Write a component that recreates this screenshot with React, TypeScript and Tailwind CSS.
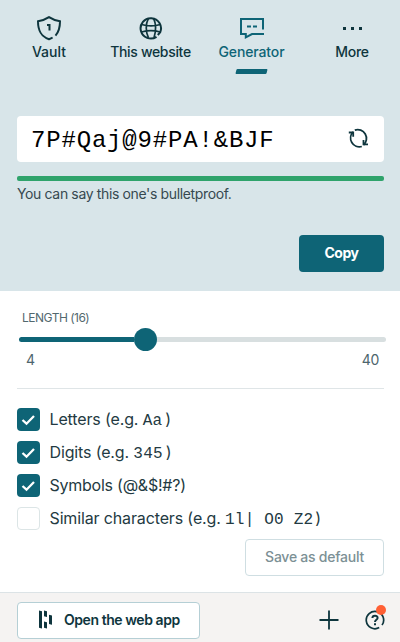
import type { ReactNode } from "react";

function Tab({ icon, label, width, labelClass, active }: { icon: ReactNode; label: string; width: string; labelClass: string; active?: boolean }) {
  return (
    <button className={`flex shrink-0 flex-col items-center ${width} ${active ? "text-[#0e6476]" : "text-[#0e353d]"}`}>
      <span className="flex h-6 items-center">{icon}</span>
      <span className={`mt-0.5 text-sm leading-5 font-medium whitespace-nowrap ${labelClass}`}>{label}</span>
      {active && <span className="mt-[7px] h-[5px] w-[31px] -skew-x-[14deg] rounded-[1px] bg-[#0e6476]" />}
    </button>
  );
}

function Shield() {
  return (
    <svg width="26" height="26" viewBox="0 0 26 26" fill="none" stroke="currentColor" strokeWidth="2">
      <path d="M19.500 20.700C22.800 17 24 12.800 24 6.300C20.200 5.800 16.400 4.400 13 2.200C9.600 4.400 5.800 5.800 2 6.300C2 15.700 4.800 21.300 13 24.200C14.400 23.700 15.500 23.200 16.600 22.500" />
      <path d="M11 9.900H13.500V15.500" />
    </svg>
  );
}

function Globe() {
  return (
    <svg width="24" height="24" viewBox="0 0 24 24" fill="none" stroke="currentColor" strokeWidth="2">
      <path d="M17.500 20.800A10.200 10.200 0 1 1 21.200 16.300L18.800 19" />
      <path d="M2.500 8.500C8 10 16 10 21.500 8.500M2.500 16C8 14.500 16 14.500 21 16M9.500 2.200C6.500 8 6.500 16 9.500 21.800M14.500 2.200C17.200 8 17.200 15 15 21.800" strokeWidth="1.700" />
    </svg>
  );
}

function Chat() {
  return (
    <svg width="26" height="24" viewBox="0 0 26 24" fill="none" stroke="currentColor" strokeWidth="2">
      <path d="M24 13.500V3H2V18H6.800V21.300L13 18H25" />
      <path d="M8 10.500H12M14 10.500H18" />
    </svg>
  );
}

function Option({ checked, children }: { checked?: boolean; children: ReactNode }) {
  return (
    <label className="flex h-[33px] items-center">
      <span className={`flex size-[23px] shrink-0 items-center justify-center rounded-[4px] ${checked ? "bg-[#0e6476]" : "border border-[#dce5e6] bg-white"}`}>
        {checked && (
          <svg width="15" height="12" viewBox="0 0 15 12" fill="none" stroke="white" strokeWidth="2.300">
            <path d="M1.500 6L5.500 9.700L13 2" />
          </svg>
        )}
      </span>
      <span className="mb-px ml-[9.5px] flex h-6 items-baseline whitespace-pre text-base leading-6 text-[#233a42]">{children}</span>
    </label>
  );
}

export default function App() {
  return (
    <div className="flex h-[642px] w-[400px] flex-col overflow-hidden bg-white font-['Inter','Liberation_Sans',sans-serif]">
      <section className="h-[291px] bg-[#d8e5e9]">
        <nav className="flex h-[116px] items-start pt-4">
          <Tab icon={<Shield />} label="Vault" width="w-[98px]" labelClass="tracking-[0.02px]" />
          <Tab icon={<Globe />} label="This website" width="w-[105px]" labelClass="tracking-[-0.32px]" />
          <Tab icon={<Chat />} label="Generator" width="w-[97px]" labelClass="tracking-[-0.13px]" active />
          <Tab
            icon={
              <span className="flex gap-[5px]">
                <i className="size-[3px] bg-current" />
                <i className="size-[3px] bg-current" />
                <i className="size-[3px] bg-current" />
              </span>
            }
            label="More"
            width="w-[104px]"
            labelClass="tracking-[-0.3px]"
          />
        </nav>
        <div className="px-[17px] pr-4">
          <div className="flex h-[46px] items-center justify-between rounded-[4px] bg-white pr-[15px] pl-[14px]">
            <span className="pt-[3px] font-['Liberation_Mono',monospace] text-2xl leading-8 tracking-[0.82px] text-black">7P#Qaj@9#PA!&amp;BJF</span>
            <svg className="-mt-0.5" width="21" height="21" viewBox="0 0 21 21" fill="none" stroke="#0e353d" strokeWidth="1.800">
              <path d="M6.800 2.100A8.800 8.800 0 0 1 15.500 17M13.800 18.500A8.800 8.800 0 0 1 5.200 3.800" />
              <path d="M0.800 4.500H5.200V8.800M20 16.300H15.500V12" />
            </svg>
          </div>
          <div className="mt-[14px] h-[5px] rounded-[2px] bg-[#2fa36b]" />
          <p className="mt-[3px] text-sm leading-5 tracking-[-0.36px] text-[#364950]">You can say this one's bulletproof.</p>
          <div className="mt-[31px] flex justify-end">
            <button className="h-[37px] w-[85px] rounded-[4px] bg-[#0e6476] pb-px text-sm font-bold tracking-[-0.5px] text-white">Copy</button>
          </div>
        </div>
      </section>
      <section className="flex h-[301px] flex-col pr-4 pl-[17px]">
        <div className="pt-[19px] pl-[5px] text-xs leading-4 tracking-[-0.5px] text-[#52686e]">LENGTH (16)</div>
        <div className="mt-[1px] -mr-0.5 ml-0.5 flex h-6 items-center">
          <div className="h-[5px] w-[115px] rounded-l-full bg-[#0e6476]" />
          <div className="size-[23px] shrink-0 rounded-full bg-[#0e6476]" />
          <div className="h-[5px] grow rounded-r-full bg-[#d8dfe0]" />
        </div>
        <div className="mt-[-1px] flex justify-between pr-[5px] pl-[9px] text-sm leading-5 tracking-[-0.3px] text-[#4d656d]">
          <span>4</span>
          <span>40</span>
        </div>
        <div className="mt-[18px] h-px shrink-0 bg-[#dfe5e7]" />
        <div className="mt-[14px]">
          <Option checked><span className="tracking-[-0.14px]">Letters (e.g. </span><span className="font-['Liberation_Mono',monospace] leading-4 tracking-[0.2px]">Aa</span><span className="ml-[3px]">)</span></Option>
          <Option checked><span className="tracking-[-0.14px]">Digits (e.g. </span><span className="font-['Liberation_Mono',monospace] leading-4 tracking-[0.2px]">345</span><span className="ml-[3px]">)</span></Option>
          <Option checked><span className="tracking-[-0.24px]">Symbols (@&amp;$!#?)</span></Option>
          <Option><span className="tracking-[-0.14px]">Similar characters (e.g. </span><span className="font-['Liberation_Mono',monospace] leading-4 tracking-[0.2px]">1l| O0 Z2</span><span className="ml-[2px]">)</span></Option>
        </div>
        <button className="mt-1 h-[37px] w-[139px] shrink-0 self-end rounded-[4px] border border-[#cfdee2] pb-px text-sm font-medium tracking-[-0.25px] text-[#7c9095]">Save as default</button>
      </section>
      <footer className="flex h-[50px] items-center border-t border-[#dce3e6] bg-[#f5f3f2] pt-[5px] pr-[15px] pl-[17px] text-[#0e353d]">
        <button className="flex h-[37px] w-[183px] items-center rounded-[4px] border border-[#b5cfd5] bg-white pb-px pl-[21px]">
          <svg width="14" height="19" viewBox="0 0 14 19" fill="currentColor">
            <path d="M0 0.500L3 1.300V18.500L0 17.700ZM5 0.500L8 1.300V7L5 6.200ZM5 11.500L8 12.300V18.500L5 17.700ZM10 4.800L13 5.600V14.800L10 14Z" />
          </svg>
          <span className="ml-[11px] text-sm font-semibold tracking-[-0.44px] whitespace-nowrap">Open the web app</span>
        </button>
        <svg className="ml-auto" width="20" height="20" viewBox="0 0 20 20" fill="none" stroke="currentColor" strokeWidth="1.800">
          <path d="M10 0.500V19.500M0.500 10H19.500" />
        </svg>
        <div className="relative ml-[26px] size-5">
          <svg width="20" height="20" viewBox="0 0 20 20" fill="none" stroke="currentColor" strokeWidth="1.700">
            <path d="M14.200 17.600A8.700 8.700 0 1 1 17 15.100" />
            <path d="M7.400 8.100C7.400 4.900 12.700 4.900 12.600 8C12.500 9.800 10 9.700 10 11.900" strokeWidth="2" />
            <path d="M9 13.200H11V15.200H9Z" fill="currentColor" stroke="none" />
          </svg>
          <span className="absolute -top-[5px] left-[11px] size-[10px] rounded-full bg-[#ff6035]" />
        </div>
      </footer>
    </div>
  );
}
